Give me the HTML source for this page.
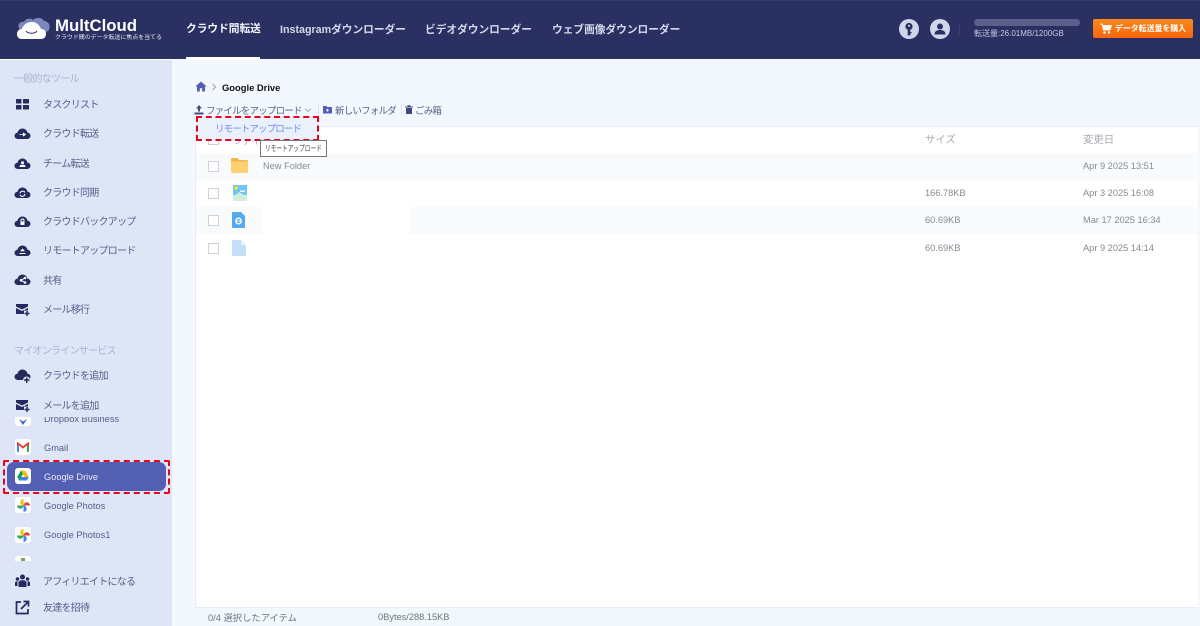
<!DOCTYPE html>
<html lang="ja"><head><meta charset="utf-8"><title>MultCloud</title>
<style>
html,body{margin:0;padding:0;width:1200px;height:626px;overflow:hidden;background:#f3f7fe;font-family:"Liberation Sans","Noto Sans CJK JP",sans-serif;}
.a{position:absolute;white-space:nowrap;}
#hd{position:absolute;left:0;top:0;width:1200px;height:59px;background:#2a3062;border-top:1px solid #34396d;box-sizing:border-box;}
#sb{position:absolute;left:0;top:59px;width:172px;height:567px;background:#dde5f6;border-top:1px solid #fff;box-sizing:border-box;}
.nav{font-size:10.7px;color:#d5d9ea;font-weight:bold;top:22px;line-height:16px;}
.si{font-size:10px;letter-spacing:-.75px;color:#555f8a;left:43px;line-height:14px;}
.sg{font-size:10px;letter-spacing:-.75px;color:#a9b2d4;left:14px;line-height:14px;}
.sv{font-size:9.25px;color:#555f8a;left:44px;line-height:14px;}
.ic{position:absolute;left:14px;width:17px;height:17px;}
.tile{position:absolute;left:15px;width:16px;height:16px;background:#fff;border-radius:3px;}
.row{position:absolute;left:196px;width:1002px;height:27px;}
.cb{position:absolute;left:208px;width:9px;height:9px;border:1px solid #cfd2d8;background:#fff;}
.t{font-size:9.25px;color:#858a94;line-height:14px;}
.tb{font-size:9.5px;letter-spacing:-.8px;color:#5a6486;line-height:14px;top:105px;}
</style></head><body>

<div id="hd"></div>
<svg class="a" style="left:16px;top:16px" width="35" height="24" viewBox="0 0 35 24">
<path d="M3 12C1 8 5 5 8 6 10 2 15 2 17 4 20 1 26 1 28 5 32 5 35 9 33 14L28 18H6Z" fill="#7e88bd"/>
<path d="M6 23C2 23 1 20 1 18 1 15 3 13 6 13 7 9 11 6 16 6 21 6 24 10 25 13 29 13 30 16 30 18 30 21 28 23 25 23Z" fill="#fff"/>
<path d="M10 15C12 18 19 18 21 15" fill="none" stroke="#2a3062" stroke-width="1"/>
</svg>
<div class="a" style="left:55px;top:16px;font-size:16.8px;font-weight:bold;color:#fff;line-height:20px">MultCloud</div>
<div class="a" style="left:55px;top:34px;font-size:5.95px;color:#e4e7f3;line-height:9px">クラウド間のデータ転送に焦点を当てる</div>
<div class="a nav" style="left:186px;top:21px;color:#f4f5fa">クラウド間転送</div>
<div class="a" style="left:186px;top:57px;width:74px;height:2px;background:#fff"></div>
<div class="a nav" style="left:280px">Instagramダウンローダー</div>
<div class="a nav" style="left:425px">ビデオダウンローダー</div>
<div class="a nav" style="left:552px">ウェブ画像ダウンローダー</div>

<svg class="a" style="left:899px;top:19px" width="20" height="20" viewBox="0 0 20 20"><circle cx="10" cy="10" r="10" fill="#cfd6ec"/><circle cx="10" cy="7.5" r="3.6" fill="#2a3062"/><rect x="8.7" y="9" width="2.6" height="7.5" fill="#2a3062"/><rect x="10" y="13" width="2.5" height="1.4" fill="#2a3062"/><circle cx="10" cy="6.8" r="1.1" fill="#cfd6ec"/></svg>
<svg class="a" style="left:930px;top:19px" width="20" height="20" viewBox="0 0 20 20"><circle cx="10" cy="10" r="10" fill="#cfd6ec"/><circle cx="10" cy="7.5" r="3" fill="#2a3062"/><path d="M4.5 15.5C4.5 12 7 11 10 11S15.500 12 15.500 15.500Z" fill="#2a3062"/></svg>
<div class="a" style="left:959px;top:24px;width:1px;height:11px;background:#3a4172"></div>
<div class="a" style="left:974px;top:19px;width:106px;height:7px;border-radius:4px;background:#5a5f8b"></div>
<div class="a" style="left:974px;top:27px;font-size:8px;line-height:13px;color:#c3cbe6">転送量:26.01MB/1200GB</div>
<div class="a" style="left:1093px;top:19px;width:100px;height:19px;border-radius:2px;background:linear-gradient(#fb8a1c,#f9650f)"></div>
<svg class="a" style="left:1100px;top:23px" width="12" height="11" viewBox="0 0 12 11"><path d="M0 1H2.200L3.500 7H10L11.500 2.500H3" fill="#fff" stroke="#fff" stroke-width=".8"/><circle cx="4.500" cy="9.500" r="1.200" fill="#fff"/><circle cx="9" cy="9.500" r="1.200" fill="#fff"/></svg>
<div class="a" style="left:1115px;top:22px;font-size:7.9px;line-height:13px;font-weight:bold;color:#fff">データ転送量を購入</div>

<div id="sb"></div>
<div class="a sg" style="top:73px">一般的なツール</div>

<svg class="ic" style="top:96px" viewBox="0 0 17 17"><g fill="#232b5f"><rect x="2" y="3" width="5.500" height="4.500" rx=".5"/><rect x="9" y="3" width="6" height="4.500" rx=".5"/><rect x="2" y="9" width="5.500" height="4.500" rx=".5"/><rect x="9" y="9" width="6" height="4.500" rx=".5"/></g></svg>
<div class="a si" style="top:99px">タスクリスト</div>

<svg class="ic" style="top:125px" viewBox="0 0 17 17"><path d="M4 14C1.500 14 .5 12.300 .5 10.800.5 9 2 7.700 3.500 7.700 4.200 5 6.300 3.500 8.500 3.500 11 3.500 13 5.300 13.500 7.700 15.200 7.700 16.500 9 16.500 10.800 16.500 12.500 15 14 13 14Z" fill="#232b5f"/><path d="M5.500 9.500H10M9 7.800L11.500 9.500 9 11.200" fill="#fff" stroke="#fff" stroke-width=".8"/></svg>
<div class="a si" style="top:128px">クラウド転送</div>

<svg class="ic" style="top:155px" viewBox="0 0 17 17"><path d="M4 14C1.500 14 .5 12.300 .5 10.800.5 9 2 7.700 3.500 7.700 4.200 5 6.300 3.500 8.500 3.500 11 3.500 13 5.300 13.500 7.700 15.200 7.700 16.500 9 16.500 10.800 16.500 12.500 15 14 13 14Z" fill="#232b5f"/><circle cx="8.500" cy="7.800" r="1.500" fill="#fff"/><path d="M5.500 12C5.500 10 7 9.800 8.500 9.800S11.500 10 11.500 12Z" fill="#fff"/></svg>
<div class="a si" style="top:158px">チーム転送</div>

<svg class="ic" style="top:184px" viewBox="0 0 17 17"><path d="M4 14C1.500 14 .5 12.300 .5 10.800.5 9 2 7.700 3.500 7.700 4.200 5 6.300 3.500 8.500 3.500 11 3.500 13 5.300 13.500 7.700 15.200 7.700 16.500 9 16.500 10.800 16.500 12.500 15 14 13 14Z" fill="#232b5f"/><path d="M6 9.500A2.700 2.700 0 0 1 11 8.500M11 10A2.700 2.700 0 0 1 6 11" fill="none" stroke="#fff" stroke-width="1"/></svg>
<div class="a si" style="top:187px">クラウド同期</div>

<svg class="ic" style="top:213px" viewBox="0 0 17 17"><path d="M4 14C1.500 14 .5 12.300 .5 10.800.5 9 2 7.700 3.500 7.700 4.200 5 6.300 3.500 8.500 3.500 11 3.500 13 5.300 13.500 7.700 15.200 7.700 16.500 9 16.500 10.800 16.500 12.500 15 14 13 14Z" fill="#232b5f"/><rect x="6.500" y="8.500" width="4" height="3.500" fill="#fff"/><path d="M7 8.500V7.500A1.500 1.500 0 0 1 10 7.500V8.500" fill="none" stroke="#fff"/></svg>
<div class="a si" style="top:216px">クラウドバックアップ</div>

<svg class="ic" style="top:242px" viewBox="0 0 17 17"><path d="M4 14C1.500 14 .5 12.300 .5 10.800.5 9 2 7.700 3.500 7.700 4.200 5 6.300 3.500 8.500 3.500 11 3.500 13 5.300 13.500 7.700 15.200 7.700 16.500 9 16.500 10.800 16.500 12.500 15 14 13 14Z" fill="#232b5f"/><path d="M8.500 6.500L11 9.200H6ZM5.500 11H11.500V12H5.500Z" fill="#fff"/></svg>
<div class="a si" style="top:245px">リモートアップロード</div>

<svg class="ic" style="top:271px" viewBox="0 0 17 17"><path d="M4 14C1.500 14 .5 12.300 .5 10.800.5 9 2 7.700 3.500 7.700 4.200 5 6.300 3.500 8.500 3.500 11 3.500 13 5.300 13.500 7.700 15.200 7.700 16.500 9 16.500 10.800 16.500 12.500 15 14 13 14Z" fill="#232b5f"/><path d="M11 7L7 9.300 11 11.500" fill="none" stroke="#fff"/><circle cx="11" cy="7" r="1.300" fill="#fff"/><circle cx="7" cy="9.300" r="1.300" fill="#fff"/><circle cx="11" cy="11.500" r="1.300" fill="#fff"/></svg>
<div class="a si" style="top:275px">共有</div>

<svg class="ic" style="top:301px" viewBox="0 0 17 17"><path d="M2 3H14V5.500L8 8.500 2 5.500Z" fill="#232b5f"/><path d="M2 7L8 10 14 7V9.500H10V13H2Z" fill="#232b5f"/><path d="M10.500 12.500H15.500M13 10V15" stroke="#232b5f" stroke-width="1.500"/></svg>
<div class="a si" style="top:304px">メール移行</div>

<div class="a sg" style="top:345px">マイオンラインサービス</div>

<svg class="ic" style="top:367px" viewBox="0 0 17 17"><path d="M4 13C1.500 13 .5 11.300 .5 9.800.5 8 2 6.700 3.500 6.700 4.200 4 6.300 2.500 8.500 2.500 11 2.500 13 4.300 13.500 6.700 15.200 6.700 16.500 8 16.500 9.800 16.500 11.500 15 13 13 13Z" fill="#232b5f"/><circle cx="12.500" cy="13" r="3.500" fill="#dde5f6"/><path d="M10 13H15.500M12.700 10.500V16" stroke="#232b5f" stroke-width="1.500"/></svg>
<div class="a si" style="top:370px">クラウドを追加</div>

<svg class="ic" style="top:397px" viewBox="0 0 17 17"><path d="M2 3H14V5.500L8 8.500 2 5.500Z" fill="#232b5f"/><path d="M2 7L8 10 14 7V9.500H10V13H2Z" fill="#232b5f"/><path d="M10.500 12.500H15.500M13 10V15" stroke="#232b5f" stroke-width="1.500"/></svg>
<div class="a si" style="top:400px">メールを追加</div>

<!-- scrolled list -->
<div class="a" style="left:0;top:417px;width:172px;height:144px;overflow:hidden">
  <div class="tile" style="top:-7px"></div>
  <svg class="a" style="left:17px;top:1px" width="12" height="8" viewBox="0 0 12 8"><path d="M2 1L6 3.500 10 1 6 7Z" fill="#2f62d6"/></svg>
  <div class="a sv" style="top:-5px">Dropbox Business</div>
  <div class="tile" style="top:22px"></div>
  <svg class="a" style="left:17px;top:25px" width="12" height="10" viewBox="0 0 12 10"><path d="M1 9.800V1.500L6 5.500 11 1.500V9.800" fill="none" stroke="#ea4335" stroke-width="2"/><path d="M1 9.800V3.500" stroke="#4285f4" stroke-width="2"/><path d="M11 9.800V3.500" stroke="#34a853" stroke-width="2"/></svg>
  <div class="a sv" style="top:24px">Gmail</div>
  <div class="a" style="left:7px;top:45px;width:159px;height:29px;background:#535fb3;border-radius:7px"></div>
  <div class="tile" style="top:51px"></div>
  <svg class="a" style="left:17px;top:53px" width="12" height="11" viewBox="0 0 12 11"><path d="M4 .5H8L4.500 6.500 2.300 10.500 .2 7Z" fill="#0f9d58"/><path d="M8 .5L11.800 7H7.500L4.500 1.500 4 .5Z" fill="#fbbc04"/><path d="M3.800 7H11.800L9.800 10.500H1.800Z" fill="#4285f4"/></svg>
  <div class="a" style="left:44px;top:53px;font-size:9.25px;line-height:14px;color:#e7e9f6">Google Drive</div>
  <div class="tile" style="top:80px"></div>
  <svg class="a" style="left:17px;top:82px" width="13" height="13" viewBox="0 0 12 12"><path d="M6 6V0A3 3 0 0 0 6 6Z" fill="#fbbc04"/><path d="M6 6H12A3 3 0 0 0 6 6Z" fill="#ea4335"/><path d="M6 6V12A3 3 0 0 0 6 6Z" fill="#4285f4"/><path d="M6 6H0A3 3 0 0 0 6 6Z" fill="#34a853"/></svg>
  <div class="a sv" style="top:82px">Google Photos</div>
  <div class="tile" style="top:110px"></div>
  <svg class="a" style="left:17px;top:112px" width="13" height="13" viewBox="0 0 12 12"><path d="M6 6V0A3 3 0 0 0 6 6Z" fill="#fbbc04"/><path d="M6 6H12A3 3 0 0 0 6 6Z" fill="#ea4335"/><path d="M6 6V12A3 3 0 0 0 6 6Z" fill="#4285f4"/><path d="M6 6H0A3 3 0 0 0 6 6Z" fill="#34a853"/></svg>
  <div class="a sv" style="top:111px">Google Photos1</div>
  <div class="tile" style="top:139px"></div>
  <div class="a" style="left:21px;top:141px;width:4px;height:3px;background:#6fae56"></div>
</div>
<div class="a" style="left:3px;top:460px;width:167px;height:34px;border:2px dashed #e8001c;box-sizing:border-box;border-radius:2px"></div>

<svg class="ic" style="top:572px" viewBox="0 0 17 17"><g fill="#232b5f"><circle cx="8.500" cy="5" r="2.500"/><circle cx="3.500" cy="7" r="1.800"/><circle cx="13.500" cy="7" r="1.800"/><path d="M4.500 15V11C4.500 9 6 8.300 8.500 8.300S12.500 9 12.500 11V15Z"/><path d="M1 14V11C1 9.800 2 9.300 3.500 9.300V14ZM16 14V11C16 9.800 15 9.300 13.500 9.300V14Z"/></g></svg>
<div class="a si" style="top:576px">アフィリエイトになる</div>
<svg class="ic" style="top:599px" viewBox="0 0 17 17"><path d="M7 3H2.500V14.500H14V10" fill="none" stroke="#232b5f" stroke-width="1.700"/><path d="M7 10L13.500 3.500M9.500 2.500H14.500V7.500" fill="none" stroke="#232b5f" stroke-width="1.700"/></svg>
<div class="a si" style="top:602px">友達を招待</div>

<!-- main -->
<svg class="a" style="left:195px;top:81px" width="12" height="11" viewBox="0 0 12 11"><path d="M6 .5L11.700 5.500H10V10.500H7.200V7.200H4.800V10.500H2V5.500H.3Z" fill="#535fb3"/></svg>
<svg class="a" style="left:211px;top:83px" width="6" height="8" viewBox="0 0 6 8"><path d="M1.500 1L4.500 4 1.500 7" fill="none" stroke="#888" stroke-width=".8"/></svg>
<div class="a" style="left:222px;top:81px;font-size:9.4px;font-weight:bold;color:#111;line-height:14px">Google Drive</div>

<svg class="a" style="left:194px;top:105px" width="10" height="10" viewBox="0 0 10 10"><path d="M5 0L8 3.500H6V6.500H4V3.500H2ZM.5 7.500H9.500V9.500H.5Z" fill="#414b7d"/></svg>
<div class="a tb" style="left:206px">ファイルをアップロード</div>
<svg class="a" style="left:304px;top:107px" width="8" height="6" viewBox="0 0 8 6"><path d="M1 1.500L4 4.500 7 1.500" fill="none" stroke="#7a84a6" stroke-width=".7"/></svg>
<div class="a" style="left:318px;top:103px;width:1px;height:13px;background:#dde3ef"></div>
<svg class="a" style="left:323px;top:105px" width="9" height="9" viewBox="0 0 9 9"><path d="M0 1H3.500L4.500 2H9V8.500H0Z" fill="#535fb3"/><path d="M3 5.200H6M4.500 3.800V6.700" stroke="#fff" stroke-width=".8"/></svg>
<div class="a tb" style="left:335px">新しいフォルダ</div>
<div class="a" style="left:401px;top:103px;width:1px;height:13px;background:#dde3ef"></div>
<svg class="a" style="left:405px;top:105px" width="8" height="9" viewBox="0 0 8 9"><path d="M0 1.500H8V2.500H0ZM2.500 .2H5.500V1.500H2.500ZM1 3H7V9H1Z" fill="#414b7d"/></svg>
<div class="a tb" style="left:415px">ごみ箱</div>

<div class="a" style="left:195px;top:126px;width:1003px;height:482px;background:#fff;border:1px solid #e6ecf8;border-right:none;box-sizing:border-box"></div>

<div class="row" style="top:153px;background:#f8fafc"></div>
<div class="row" style="top:207px;background:#f8fafc"></div>
<div class="a" style="left:262px;top:207px;width:148px;height:27px;background:#fff"></div>

<div class="a" style="left:925px;top:133px;font-size:10.4px;color:#a7abb4;line-height:15px">サイズ</div>
<div class="a" style="left:1083px;top:133px;font-size:10.4px;color:#a7abb4;line-height:15px">変更日</div>

<div class="cb" style="top:134px"></div>
<div class="a" style="left:233px;top:134px;font-size:9.25px;color:#a7abb4;line-height:14px">ファイル</div>
<div class="cb" style="top:161px"></div>
<div class="cb" style="top:188px"></div>
<div class="cb" style="top:215px"></div>
<div class="cb" style="top:243px"></div>

<svg class="a" style="left:231px;top:158px" width="17" height="15" viewBox="0 0 17 15"><path d="M1 0H6.500L8 2H15.500A1.500 1.500 0 0 1 17 3.500V3.500H0V1Z" fill="#f3b64c"/><path d="M0 3.500H17V13.500A1.500 1.500 0 0 1 15.500 15H1.500A1.500 1.500 0 0 1 0 13.500Z" fill="#fdd071"/></svg>
<svg class="a" style="left:233px;top:185px" width="14" height="16" viewBox="0 0 14 16"><rect width="14" height="16" fill="#e3f3ec"/><rect width="14" height="10" fill="#6cc7f2"/><circle cx="3" cy="3" r="1.800" fill="#fddb4f"/><path d="M0 12L6 7 14 12V16H0Z" fill="#cfeedd"/><path d="M7 5.500H12V6.800H7Z" fill="#fff"/></svg>
<svg class="a" style="left:232px;top:212px" width="13" height="16" viewBox="0 0 13 16"><path d="M1 0H9L13 4V15A1 1 0 0 1 12 16H1A1 1 0 0 1 0 15V1A1 1 0 0 1 1 0Z" fill="#55a9ee"/><circle cx="6.500" cy="9" r="2.800" fill="none" stroke="#fff" stroke-width="1.300"/><path d="M4 9H9" stroke="#fff"/></svg>
<svg class="a" style="left:232px;top:240px" width="14" height="16" viewBox="0 0 14 16"><path d="M1 0H9L14 5V15A1 1 0 0 1 13 16H1A1 1 0 0 1 0 15V1A1 1 0 0 1 1 0Z" fill="#c4e0f9"/><path d="M9 0L14 5H9Z" fill="#e4f1fc"/></svg>

<div class="a t" style="left:263px;top:159px">New Folder</div>
<div class="a t" style="left:925px;top:186px">166.78KB</div>
<div class="a t" style="left:925px;top:213px">60.69KB</div>
<div class="a t" style="left:925px;top:241px">60.69KB</div>
<div class="a t" style="left:1083px;top:159px">Apr 9 2025 13:51</div>
<div class="a t" style="left:1083px;top:186px">Apr 3 2025 16:08</div>
<div class="a t" style="left:1083px;top:213px">Mar 17 2025 16:34</div>
<div class="a t" style="left:1083px;top:241px">Apr 9 2025 14:14</div>

<div class="a" style="left:196px;top:116px;width:123px;height:25px;background:#eaf1fd;border:2px dashed #e8001c;box-sizing:border-box"></div>
<div class="a" style="left:215px;top:123px;font-size:9.5px;letter-spacing:-.9px;color:#6d8df0;line-height:14px">リモートアップロード</div>
<div class="a" style="left:260px;top:140px;width:67px;height:17px;background:#fff;border:1px solid #777;box-sizing:border-box"></div>
<div class="a" style="left:265px;top:142px;font-size:8px;line-height:14px;color:#444;transform:scaleX(.71);transform-origin:left center">リモートアップロード</div>

<div class="a" style="left:208px;top:611px;font-size:9.3px;color:#6d7380;line-height:14px">0/4 選択したアイテム</div>
<div class="a" style="left:378px;top:610px;font-size:9.25px;color:#6d7380;line-height:14px">0Bytes/288.15KB</div>
</body></html>
